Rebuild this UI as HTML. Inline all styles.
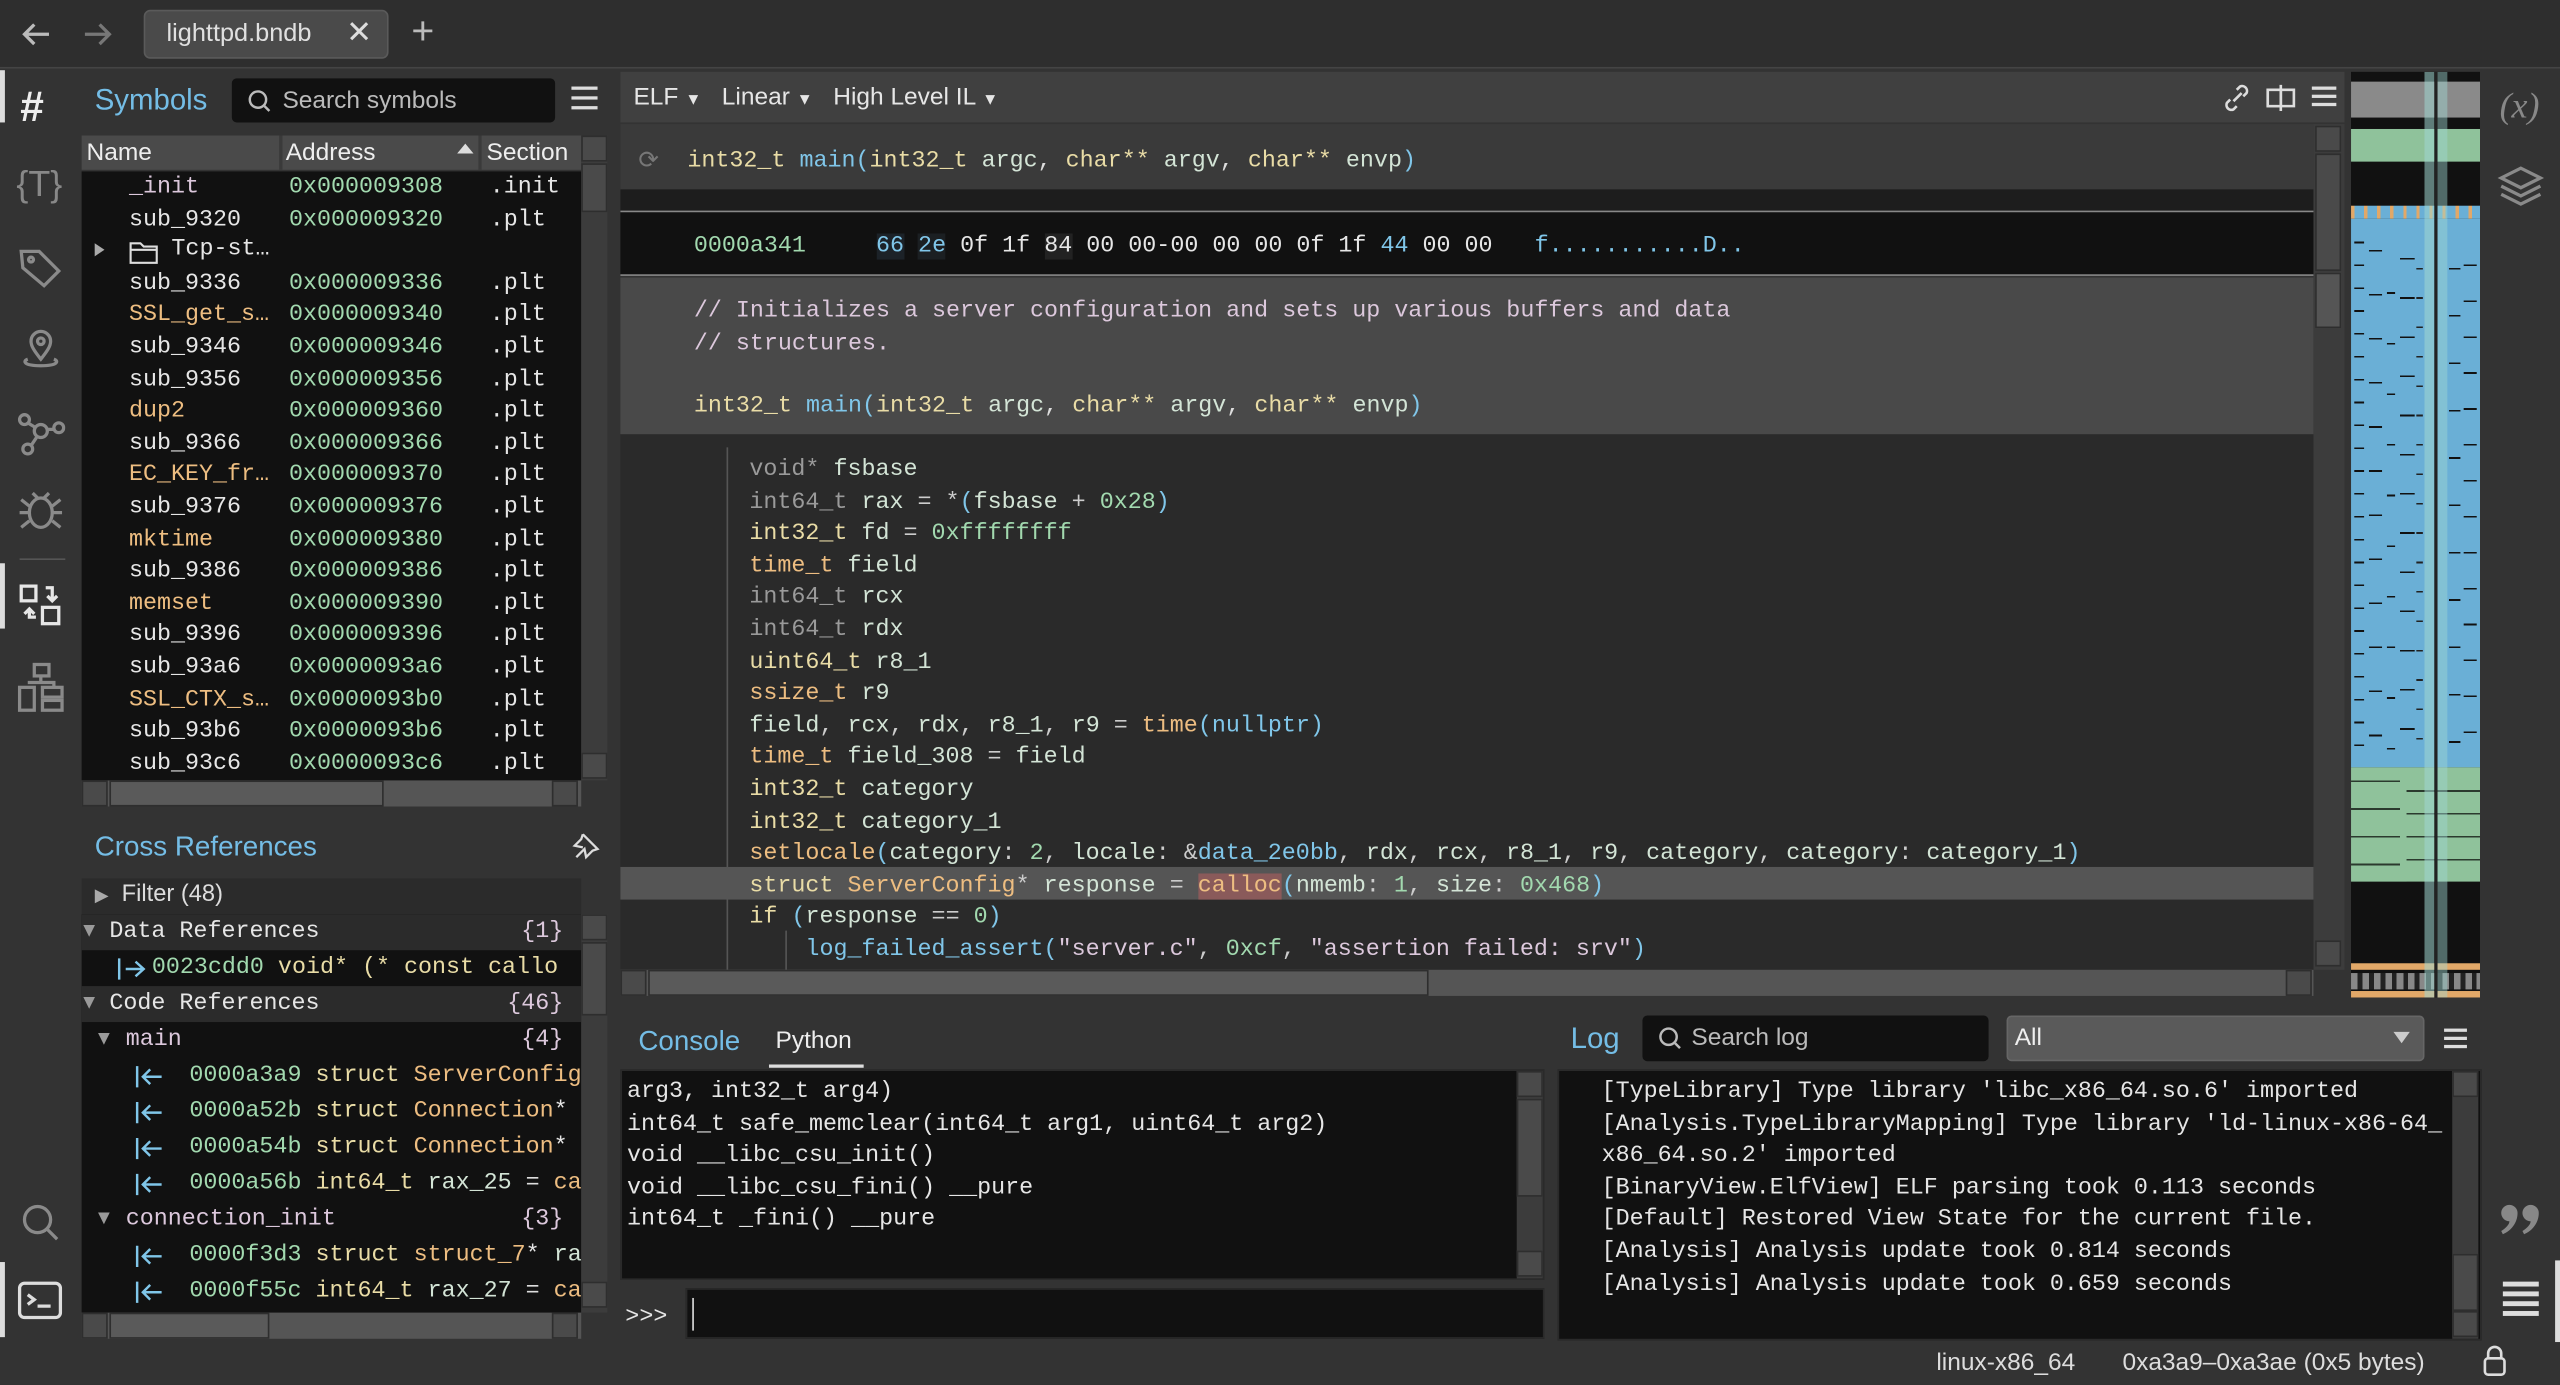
<!DOCTYPE html>
<html><head><meta charset="utf-8"><style>
*{box-sizing:border-box;margin:0;padding:0}
html,body{width:2560px;height:1384px;overflow:hidden;background:#333}
#w{position:absolute;left:0;top:0;width:1568px;height:848px;transform:scale(1.632653);transform-origin:0 0;background:#333;font-family:"Liberation Sans",sans-serif;color:#ddd;font-size:15px}
.a{position:absolute}
.m{font-family:"Liberation Mono",monospace;font-size:14.3px;white-space:pre}
.y{color:#e9dca6}.o{color:#edbd81}.b{color:#80c6e9}.g{color:#a2d9af}.d{color:#9a9a9a}.v{color:#d3e4d6}.p{color:#dcc8dc}.w{color:#e6e6e6}
.sb{position:absolute;background:#4a4a4a;border:1px solid #2e2e2e}
.ic{position:absolute;stroke:#8a8a8a;fill:none;stroke-width:2}
.col{position:absolute;line-height:19.6px}
.xr{position:absolute;left:0;width:306px;height:22px;line-height:22px}
.xr span.r{position:absolute;right:11px}
.ar{position:absolute;top:4px}
.mm{position:absolute}
</style></head><body><div id="w">
<!-- top bar -->
<div class="a" style="left:0;top:0;width:1568px;height:42px;background:#2e2e2e;border-bottom:1px solid #444"></div>
<svg class="a" style="left:12px;top:12px" width="20" height="18"><path d="M18 9H3M9 3L3 9l6 6" stroke="#bbb" stroke-width="2" fill="none"/></svg>
<svg class="a" style="left:50px;top:12px" width="20" height="18"><path d="M2 9h15M11 3l6 6-6 6" stroke="#777" stroke-width="2" fill="none"/></svg>
<div class="a" style="left:88px;top:6px;width:150px;height:30px;background:#4a4a4a;border:1px solid #5a5a5a;border-radius:4px"></div>
<div class="a" style="left:102px;top:12px;font-size:15.5px;color:#e0e0e0">lighttpd.bndb</div>
<div class="a" style="left:212px;top:9px;font-size:19px;color:#ddd">✕</div>
<div class="a" style="left:252px;top:6px;font-size:24px;color:#bbb">+</div>
<!-- left rail -->
<div class="a" style="left:0;top:43px;width:3px;height:32px;background:#ddd"></div>
<div class="a" style="left:0;top:345px;width:3px;height:40px;background:#ddd"></div>
<div class="a" style="left:0;top:773px;width:3px;height:46px;background:#ddd"></div>
<div class="a" style="left:12px;top:50px;font-size:26px;color:#eee;font-weight:bold;font-style:italic">#</div>
<div class="a" style="left:10px;top:100px;font-size:22px;color:#888">{T}</div>
<svg class="ic" style="left:10px;top:150px" width="30" height="30"><path d="M3 4h11l12 12-9 9L4 14z"/><circle cx="9" cy="9" r="1.5"/></svg>
<svg class="ic" style="left:10px;top:200px" width="30" height="30"><path d="M15 20c-4-5-6-8-6-11a6 6 0 0112 0c0 3-2 6-6 11z"/><circle cx="15" cy="9" r="2"/><path d="M7 20c-3 1-3 4 8 4s11-3 8-4"/></svg>
<svg class="ic" style="left:10px;top:250px" width="30" height="30"><circle cx="5" cy="7" r="3"/><circle cx="26" cy="12" r="3"/><circle cx="7" cy="25" r="3"/><circle cx="15" cy="14" r="4"/><path d="M7 9l5 3M19 13l4 0M9 23l4-6"/></svg>
<svg class="ic" style="left:10px;top:298px" width="30" height="30"><ellipse cx="15" cy="16" rx="7" ry="9"/><path d="M3 8l5 4M27 8l-5 4M2 16h6M22 16h6M3 25l5-4M27 25l-5-4M10 4l3 3M20 4l-3 3"/></svg>
<div class="a" style="left:12px;top:342px;width:28px;height:1px;background:#555"></div>
<svg class="ic" style="left:10px;top:356px;stroke:#e6e6e6" width="30" height="30"><rect x="3" y="3" width="9" height="9"/><rect x="16" y="16" width="10" height="10"/><path d="M18 4h4v8M19 9l3 3 3-3M12 22H8v-5M5 20l3-3 3 3"/></svg>
<svg class="ic" style="left:10px;top:405px" width="30" height="32"><rect x="11" y="2" width="9" height="7"/><rect x="2" y="16" width="9" height="14"/><rect x="16" y="16" width="12" height="6"/><rect x="16" y="24" width="12" height="6"/><path d="M15 9v4M7 13h16v3"/></svg>
<svg class="ic" style="left:11px;top:735px" width="28" height="28"><circle cx="12" cy="12" r="8"/><path d="M18 18l6 6"/></svg>
<svg class="ic" style="left:10px;top:783px;stroke:#ddd" width="30" height="28"><rect x="2" y="3" width="25" height="21" rx="3"/><path d="M7 10l4 3-4 3M13 17h8"/></svg>
<!-- symbols panel -->
<div class="a" style="left:58px;top:51px;font-size:18px;color:#74bde6">Symbols</div>
<div class="a" style="left:142px;top:48px;width:198px;height:27px;background:#111;border-radius:3px"></div>
<svg class="a" style="left:151px;top:54px" width="16" height="16"><circle cx="7" cy="7" r="5" stroke="#bbb" stroke-width="1.5" fill="none"/><path d="M11 11l3 3" stroke="#bbb" stroke-width="1.5"/></svg>
<div class="a" style="left:173px;top:53px;font-size:15px;color:#bbb">Search symbols</div>
<div class="a" style="left:350px;top:53px;width:16px;height:2px;background:#ddd;box-shadow:0 6px #ddd,0 12px #ddd"></div>
<div class="a" style="left:50px;top:83px;width:306px;height:21px;background:#4a4a4a"></div>
<div class="a" style="left:171px;top:83px;width:2px;height:21px;background:#3a3a3a"></div>
<div class="a" style="left:293px;top:83px;width:2px;height:21px;background:#3a3a3a"></div>
<div class="a" style="left:53px;top:85px;font-size:15px;color:#eee">Name</div>
<div class="a" style="left:175px;top:85px;font-size:15px;color:#eee">Address</div>
<div class="a" style="left:280px;top:88px;border:5px solid transparent;border-bottom:6px solid #ddd;border-top:0"></div>
<div class="a" style="left:298px;top:85px;font-size:15px;color:#eee">Section</div>
<div class="a" style="left:50px;top:105px;width:306px;height:373px;background:#111;overflow:hidden">
<div class="col m" style="left:29px;top:1px"><span class="p">_init</span>
<span class="w">sub_9320</span>

<span class="w">sub_9336</span>
<span class="o">SSL_get_s…</span>
<span class="w">sub_9346</span>
<span class="w">sub_9356</span>
<span class="o">dup2</span>
<span class="w">sub_9366</span>
<span class="o">EC_KEY_fr…</span>
<span class="w">sub_9376</span>
<span class="o">mktime</span>
<span class="w">sub_9386</span>
<span class="o">memset</span>
<span class="w">sub_9396</span>
<span class="w">sub_93a6</span>
<span class="o">SSL_CTX_s…</span>
<span class="w">sub_93b6</span>
<span class="w">sub_93c6</span></div>
<div class="col m g" style="left:127px;top:1px">0x000009308
0x000009320

0x000009336
0x000009340
0x000009346
0x000009356
0x000009360
0x000009366
0x000009370
0x000009376
0x000009380
0x000009386
0x000009390
0x000009396
0x0000093a6
0x0000093b0
0x0000093b6
0x0000093c6</div>
<div class="col m w" style="left:250px;top:1px">.init
.plt

.plt
.plt
.plt
.plt
.plt
.plt
.plt
.plt
.plt
.plt
.plt
.plt
.plt
.plt
.plt
.plt</div>
<div class="a" style="left:8px;top:44px;border:4px solid transparent;border-left:6px solid #aaa"></div>
<svg class="a" style="left:29px;top:42px" width="18" height="15"><path d="M1 2h6l2 2h8v10H1z M1 6h16" stroke="#ddd" stroke-width="1.3" fill="none"/></svg>
<div class="a m w" style="left:55px;top:40px">Tcp-st…</div>
</div>
<div class="a" style="left:356px;top:83px;width:16px;height:395px;background:#3c3c3c"></div>
<div class="sb" style="left:356px;top:83px;width:16px;height:16px"></div>
<div class="sb" style="left:356px;top:100px;width:16px;height:30px"></div>
<div class="sb" style="left:356px;top:461px;width:16px;height:16px"></div>
<div class="a" style="left:50px;top:478px;width:306px;height:16px;background:#555"></div>
<div class="sb" style="left:50px;top:478px;width:16px;height:16px"></div>
<div class="sb" style="left:67px;top:478px;width:168px;height:16px;background:#5a5a5a"></div>
<div class="sb" style="left:338px;top:478px;width:16px;height:16px"></div>
<!-- cross refs -->
<div class="a" style="left:58px;top:509px;font-size:17px;color:#74bde6">Cross References</div>
<svg class="a" style="left:350px;top:509px" width="18" height="18"><path d="M7 2l9 9-3 1-4 4-1-5-5 5M7 2l-1 3-4 4 5 1" stroke="#ddd" stroke-width="1.4" fill="none"/></svg>
<div class="a" style="left:50px;top:538px;width:306px;height:22px;background:#2b2b2b"></div>
<div class="a" style="left:58px;top:540px;font-size:14.5px;color:#ddd"><span style="color:#aaa;font-size:11px">▶</span>&nbsp; Filter (48)</div>
<div class="a m" style="left:50px;top:560px;width:306px;height:244px;background:#111;overflow:hidden">
<div class="xr" style="top:0;background:#2b2b2b"><span class="d" style="position:absolute;left:1px">▾</span><span class="w" style="position:absolute;left:17px">Data References</span><span class="r p">{1}</span></div>
<div class="xr" style="top:22px"><svg class="ar" style="left:22px" width="18" height="15"><path d="M1 1v13M5 7.5h11M11 3l5 4.5-5 4.5" stroke="#80c6e9" stroke-width="1.5" fill="none"/></svg><span style="position:absolute;left:43px"><span class="g">0023cdd0</span> <span class="y">void* (* const callo</span></span></div>
<div class="xr" style="top:44px;background:#2b2b2b"><span class="d" style="position:absolute;left:1px">▾</span><span class="w" style="position:absolute;left:17px">Code References</span><span class="r p">{46}</span></div>
<div class="xr" style="top:66px"><span class="d" style="position:absolute;left:10px">▾</span><span class="p" style="position:absolute;left:27px">main</span><span class="r p">{4}</span></div>
<div class="xr" style="top:88px"><svg class="ar" style="left:33px" width="18" height="15"><path d="M1 1v13M5 7.5h11M9 3L4.5 7.5 9 12" stroke="#80c6e9" stroke-width="1.5" fill="none"/></svg><span style="position:absolute;left:66px"><span class="g">0000a3a9</span> <span class="y">struct</span> <span class="o">ServerConfig</span></span></div>
<div class="xr" style="top:110px"><svg class="ar" style="left:33px" width="18" height="15"><path d="M1 1v13M5 7.5h11M9 3L4.5 7.5 9 12" stroke="#80c6e9" stroke-width="1.5" fill="none"/></svg><span style="position:absolute;left:66px"><span class="g">0000a52b</span> <span class="y">struct</span> <span class="o">Connection</span><span class="w">*</span></span></div>
<div class="xr" style="top:132px"><svg class="ar" style="left:33px" width="18" height="15"><path d="M1 1v13M5 7.5h11M9 3L4.5 7.5 9 12" stroke="#80c6e9" stroke-width="1.5" fill="none"/></svg><span style="position:absolute;left:66px"><span class="g">0000a54b</span> <span class="y">struct</span> <span class="o">Connection</span><span class="w">*</span></span></div>
<div class="xr" style="top:154px"><svg class="ar" style="left:33px" width="18" height="15"><path d="M1 1v13M5 7.5h11M9 3L4.5 7.5 9 12" stroke="#80c6e9" stroke-width="1.5" fill="none"/></svg><span style="position:absolute;left:66px"><span class="g">0000a56b</span> <span class="y">int64_t</span> <span class="v">rax_25</span> = <span class="o">ca</span></span></div>
<div class="xr" style="top:176px"><span class="d" style="position:absolute;left:10px">▾</span><span class="p" style="position:absolute;left:27px">connection_init</span><span class="r p">{3}</span></div>
<div class="xr" style="top:198px"><svg class="ar" style="left:33px" width="18" height="15"><path d="M1 1v13M5 7.5h11M9 3L4.5 7.5 9 12" stroke="#80c6e9" stroke-width="1.5" fill="none"/></svg><span style="position:absolute;left:66px"><span class="g">0000f3d3</span> <span class="y">struct</span> <span class="o">struct_7</span><span class="w">*</span> <span class="v">ra</span></span></div>
<div class="xr" style="top:220px"><svg class="ar" style="left:33px" width="18" height="15"><path d="M1 1v13M5 7.5h11M9 3L4.5 7.5 9 12" stroke="#80c6e9" stroke-width="1.5" fill="none"/></svg><span style="position:absolute;left:66px"><span class="g">0000f55c</span> <span class="y">int64_t</span> <span class="v">rax_27</span> = <span class="o">ca</span></span></div>
</div>
<div class="a" style="left:356px;top:560px;width:16px;height:244px;background:#3c3c3c"></div>
<div class="sb" style="left:356px;top:560px;width:16px;height:16px"></div>
<div class="sb" style="left:356px;top:577px;width:16px;height:45px"></div>
<div class="sb" style="left:356px;top:785px;width:16px;height:16px"></div>
<div class="a" style="left:50px;top:804px;width:306px;height:16px;background:#555"></div>
<div class="sb" style="left:50px;top:804px;width:16px;height:16px"></div>
<div class="sb" style="left:67px;top:804px;width:98px;height:16px;background:#5a5a5a"></div>
<div class="sb" style="left:338px;top:804px;width:16px;height:16px"></div>
<!-- main view -->
<div class="a" style="left:380px;top:44px;width:1056px;height:31px;background:#404040"></div>
<div class="a" style="left:388px;top:51px;font-size:15px;color:#e6e6e6">ELF <span style="font-size:10px">▼</span>&nbsp;&nbsp; Linear <span style="font-size:10px">▼</span>&nbsp;&nbsp; High Level IL <span style="font-size:10px">▼</span></div>
<svg class="a" style="left:1360px;top:50px" width="20" height="20"><path d="M8 12l5-5M10 5l2-2a3 3 0 014 4l-2 2M10 15l-2 2a3 3 0 01-4-4l2-2" stroke="#ddd" stroke-width="1.6" fill="none"/></svg>
<svg class="a" style="left:1387px;top:51px" width="20" height="18"><path d="M2 4h16v10H2zM10 1v16" stroke="#ddd" stroke-width="1.6" fill="none"/><path d="M2 4h8v10H2z" fill="#404040" stroke="#ddd" stroke-width="1.6"/></svg>
<div class="a" style="left:1416px;top:53px;width:15px;height:2px;background:#ddd;box-shadow:0 5px #ddd,0 10px #ddd"></div>
<div class="a" style="left:380px;top:76px;width:1037px;height:40px;background:#3a3a3a"></div>
<div class="a" style="left:391px;top:89px;font-size:15px;color:#777">⟳</div>
<div class="a m" style="left:421px;top:91px"><span class="y">int32_t</span> <span class="b">main(</span><span class="y">int32_t</span> <span class="v">argc</span>, <span class="y">char**</span> <span class="v">argv</span>, <span class="y">char**</span> <span class="v">envp</span><span class="b">)</span></div>
<div class="a" style="left:380px;top:116px;width:1037px;height:14px;background:#1d1d1d"></div>
<div class="a" style="left:380px;top:129px;width:1037px;height:40px;background:#111;border-top:1px solid #888;border-bottom:1px solid #888"></div>
<div class="a m" style="left:425px;top:143px"><span class="g">0000a341</span>     <span class="b" style="background:#1c2228">66</span> <span class="b" style="background:#1b1f22">2e</span> <span class="w">0f 1f</span> <span class="w" style="background:#222">84</span> <span class="w">00 00-00 00 00 0f 1f</span> <span class="b">44</span> <span class="w">00 00</span>   <span class="b">f...........D..</span></div>
<div class="a" style="left:380px;top:170px;width:1037px;height:96px;background:#494949"></div>
<div class="a m p" style="left:425px;top:181px;line-height:20px">// Initializes a server configuration and sets up various buffers and data
// structures.</div>
<div class="a m" style="left:425px;top:241px"><span class="y">int32_t</span> <span class="b">main(</span><span class="y">int32_t</span> <span class="v">argc</span>, <span class="y">char**</span> <span class="v">argv</span>, <span class="y">char**</span> <span class="v">envp</span><span class="b">)</span></div>
<div class="a" style="left:380px;top:266px;width:1037px;height:328px;background:#2a2a2a"></div>
<div class="a" style="left:380px;top:531px;width:1037px;height:20px;background:#555"></div>
<div class="a" style="left:445px;top:274px;width:1px;height:320px;background:#555"></div>
<div class="a" style="left:481px;top:570px;width:1px;height:24px;background:#555"></div>
<div class="a m" style="left:459px;top:279px;line-height:19.6px;color:#ccc"><span class="d">void*</span> <span class="v">fsbase</span>
<span class="d">int64_t</span> <span class="v">rax</span> = *<span class="b">(</span><span class="v">fsbase</span> + <span class="g">0x28</span><span class="b">)</span>
<span class="y">int32_t</span> <span class="v">fd</span> = <span class="g">0xffffffff</span>
<span class="o">time_t</span> <span class="v">field</span>
<span class="d">int64_t</span> <span class="v">rcx</span>
<span class="d">int64_t</span> <span class="v">rdx</span>
<span class="y">uint64_t</span> <span class="v">r8_1</span>
<span class="o">ssize_t</span> <span class="v">r9</span>
<span class="v">field</span>, <span class="v">rcx</span>, <span class="v">rdx</span>, <span class="v">r8_1</span>, <span class="v">r9</span> = <span class="o">time</span><span class="b">(nullptr)</span>
<span class="o">time_t</span> <span class="v">field_308</span> = <span class="v">field</span>
<span class="y">int32_t</span> <span class="v">category</span>
<span class="y">int32_t</span> <span class="v">category_1</span>
<span class="o">setlocale</span><span class="b">(</span><span class="v">category</span>: <span class="g">2</span>, <span class="v">locale</span>: &amp;<span class="b">data_2e0bb</span>, <span class="v">rdx</span>, <span class="v">rcx</span>, <span class="v">r8_1</span>, <span class="v">r9</span>, <span class="v">category</span>, <span class="v">category</span>: <span class="v">category_1</span><span class="b">)</span>
<span class="y">struct</span> <span class="o">ServerConfig</span>* <span class="v">response</span> = <span class="o" style="background:#8a5a5a">calloc</span><span class="b">(</span><span class="v">nmemb</span>: <span class="g">1</span>, <span class="v">size</span>: <span class="g">0x468</span><span class="b">)</span>
<span class="y">if</span> <span class="b">(</span><span class="v">response</span> == <span class="g">0</span><span class="b">)</span>
    <span class="b">log_failed_assert(</span><span class="p">"server.c"</span>, <span class="g">0xcf</span>, <span class="p">"assertion failed: srv"</span><span class="b">)</span></div>
<div class="a" style="left:1417px;top:76px;width:19px;height:518px;background:#3c3c3c"></div>
<div class="sb" style="left:1418px;top:77px;width:16px;height:16px"></div>
<div class="sb" style="left:1418px;top:94px;width:16px;height:72px"></div>
<div class="sb" style="left:1418px;top:167px;width:16px;height:34px;background:#555"></div>
<div class="sb" style="left:1418px;top:576px;width:16px;height:16px"></div>
<div class="a" style="left:380px;top:594px;width:1037px;height:16px;background:#555"></div>
<div class="sb" style="left:380px;top:594px;width:16px;height:16px"></div>
<div class="sb" style="left:397px;top:594px;width:478px;height:16px;background:#5a5a5a"></div>
<div class="sb" style="left:1400px;top:594px;width:16px;height:16px"></div>
<!-- minimap -->
<div class="a" style="left:1440px;top:44px;width:79px;height:567px;background:#111;overflow:hidden">
<div class="a" style="left:0;top:6px;width:79px;height:22px;background:#8a8a8a"></div>
<div class="a" style="left:0;top:35px;width:79px;height:20px;background:#8fc29b"></div>
<div class="a" style="left:0;top:82px;width:79px;height:8px;background:repeating-linear-gradient(90deg,#e2a868 0 2px,#6aafd6 2px 8px)"></div>
<div class="a" style="left:0;top:90px;width:79px;height:336px;background:#6aafd6"></div>
<div class="mm" style="left:2px;top:100px;width:6px;height:326px;background:repeating-linear-gradient(0deg,transparent 0 13px,#111 13px 14px)"></div>
<div class="mm" style="left:11px;top:104px;width:8px;height:322px;background:repeating-linear-gradient(0deg,transparent 0 19px,#111 19px 20px,transparent 20px 27px)"></div>
<div class="mm" style="left:22px;top:108px;width:5px;height:318px;background:repeating-linear-gradient(0deg,transparent 0 11px,#111 11px 12px,transparent 12px 31px)"></div>
<div class="mm" style="left:30px;top:112px;width:9px;height:314px;background:repeating-linear-gradient(0deg,transparent 0 23px,#111 23px 24px)"></div>
<div class="mm" style="left:40px;top:118px;width:4px;height:308px;background:repeating-linear-gradient(0deg,transparent 0 17px,#222 17px 18px)"></div>
<div class="mm" style="left:60px;top:102px;width:7px;height:324px;background:repeating-linear-gradient(0deg,transparent 0 15px,#111 15px 16px,transparent 16px 29px)"></div>
<div class="mm" style="left:69px;top:110px;width:8px;height:316px;background:repeating-linear-gradient(0deg,transparent 0 21px,#111 21px 22px)"></div>
<div class="a" style="left:0;top:426px;width:79px;height:70px;background:#8fc29b"></div>
<div class="mm" style="left:0;top:432px;width:30px;height:64px;background:repeating-linear-gradient(0deg,transparent 0 10px,rgba(0,0,0,.7) 10px 11px,transparent 11px 17px)"></div>
<div class="mm" style="left:34px;top:436px;width:45px;height:60px;background:repeating-linear-gradient(0deg,transparent 0 13px,rgba(0,0,0,.7) 13px 14px)"></div>
<div class="a" style="left:0;top:546px;width:79px;height:4px;background:#e2a868"></div>
<div class="a" style="left:0;top:552px;width:79px;height:10px;background:repeating-linear-gradient(90deg,#888 0 4px,#222 4px 7px)"></div>
<div class="a" style="left:0;top:563px;width:79px;height:4px;background:#e2a868"></div>
<div class="a" style="left:45px;top:0;width:6px;height:567px;background:rgba(160,215,210,.55)"></div>
<div class="a" style="left:51px;top:0;width:2px;height:567px;background:#222"></div>
<div class="a" style="left:53px;top:0;width:6px;height:567px;background:rgba(160,215,210,.45)"></div>
</div>
<!-- right rail -->
<div class="a" style="left:1531px;top:52px;font-size:22px;color:#888;font-style:italic;font-family:'Liberation Serif',serif">(x)</div>
<svg class="ic" style="left:1529px;top:100px" width="30" height="32"><path d="M15 3l12 6-12 6-12-6z"/><path d="M3 14l12 6 12-6M3 19l12 6 12-6"/></svg>
<svg class="a" style="left:1530px;top:736px" width="28" height="24"><path d="M7 2a5 5 0 015 5c0 6-4 11-9 13l-1-2c3-2 5-4 5-6a5 5 0 010-10zM20 2a5 5 0 015 5c0 6-4 11-9 13l-1-2c3-2 5-4 5-6a5 5 0 010-10z" fill="#888"/></svg>
<div class="a" style="left:1565px;top:772px;width:3px;height:50px;background:#ddd"></div>
<div class="a" style="left:1533px;top:785px;width:22px;height:3px;background:#ddd;box-shadow:0 6px #ddd,0 12px #ddd,0 18px #ddd"></div>
<!-- console -->
<div class="a" style="left:391px;top:628px;font-size:17px;color:#74bde6">Console</div>
<div class="a" style="left:475px;top:629px;font-size:15px;color:#eee">Python</div>
<div class="a" style="left:471px;top:652px;width:58px;height:2px;background:#ddd"></div>
<div class="a" style="left:380px;top:655px;width:566px;height:129px;background:#111;border:1px solid #2a2a2a"></div>
<div class="a m w" style="left:384px;top:660px;line-height:19.6px">arg3, int32_t arg4)
int64_t safe_memclear(int64_t arg1, uint64_t arg2)
void __libc_csu_init()
void __libc_csu_fini() __pure
int64_t _fini() __pure</div>
<div class="a" style="left:929px;top:656px;width:16px;height:127px;background:#3c3c3c"></div>
<div class="sb" style="left:929px;top:656px;width:16px;height:16px"></div>
<div class="sb" style="left:929px;top:673px;width:16px;height:60px"></div>
<div class="sb" style="left:929px;top:766px;width:16px;height:16px"></div>
<div class="a m w" style="left:383px;top:799px">&gt;&gt;&gt;</div>
<div class="a" style="left:420px;top:789px;width:526px;height:31px;background:#111;border:1px solid #2a2a2a"></div>
<div class="a" style="left:424px;top:795px;width:1px;height:20px;background:#ddd"></div>
<!-- log -->
<div class="a" style="left:962px;top:626px;font-size:18px;color:#74bde6">Log</div>
<div class="a" style="left:1006px;top:622px;width:212px;height:28px;background:#111;border-radius:3px"></div>
<svg class="a" style="left:1015px;top:628px" width="16" height="16"><circle cx="7" cy="7" r="5" stroke="#bbb" stroke-width="1.5" fill="none"/><path d="M11 11l3 3" stroke="#bbb" stroke-width="1.5"/></svg>
<div class="a" style="left:1036px;top:627px;font-size:15px;color:#bbb">Search log</div>
<div class="a" style="left:1229px;top:622px;width:256px;height:28px;background:#5a5a5a;border:1px solid #666;border-radius:3px"></div>
<div class="a" style="left:1234px;top:627px;font-size:15px;color:#eee">All</div>
<div class="a" style="left:1466px;top:632px;border:5px solid transparent;border-top:7px solid #ccc;border-bottom:0"></div>
<div class="a" style="left:1497px;top:630px;width:14px;height:2px;background:#ddd;box-shadow:0 5px #ddd,0 10px #ddd"></div>
<div class="a" style="left:954px;top:655px;width:566px;height:166px;background:#111;border:1px solid #2a2a2a"></div>
<div class="a m w" style="left:981px;top:660px;line-height:19.6px">[TypeLibrary] Type library 'libc_x86_64.so.6' imported
[Analysis.TypeLibraryMapping] Type library 'ld-linux-x86-64_
x86_64.so.2' imported
[BinaryView.ElfView] ELF parsing took 0.113 seconds
[Default] Restored View State for the current file.
[Analysis] Analysis update took 0.814 seconds
[Analysis] Analysis update took 0.659 seconds</div>
<div class="a" style="left:1502px;top:656px;width:16px;height:164px;background:#3c3c3c"></div>
<div class="sb" style="left:1502px;top:656px;width:16px;height:16px"></div>
<div class="sb" style="left:1502px;top:768px;width:16px;height:35px"></div>
<div class="sb" style="left:1502px;top:803px;width:16px;height:16px"></div>
<!-- status bar -->
<div class="a" style="left:1186px;top:826px;font-size:15px;color:#ddd">linux-x86_64</div>
<div class="a" style="left:1300px;top:826px;font-size:15px;color:#ddd">0xa3a9–0xa3ae (0x5 bytes)</div>
<svg class="a" style="left:1520px;top:824px" width="16" height="20"><rect x="2" y="8" width="12" height="10" rx="2" stroke="#ddd" stroke-width="1.6" fill="none"/><path d="M4 8V5a4 4 0 018 0v3" stroke="#ddd" stroke-width="1.6" fill="none"/></svg>
</div></body></html>
